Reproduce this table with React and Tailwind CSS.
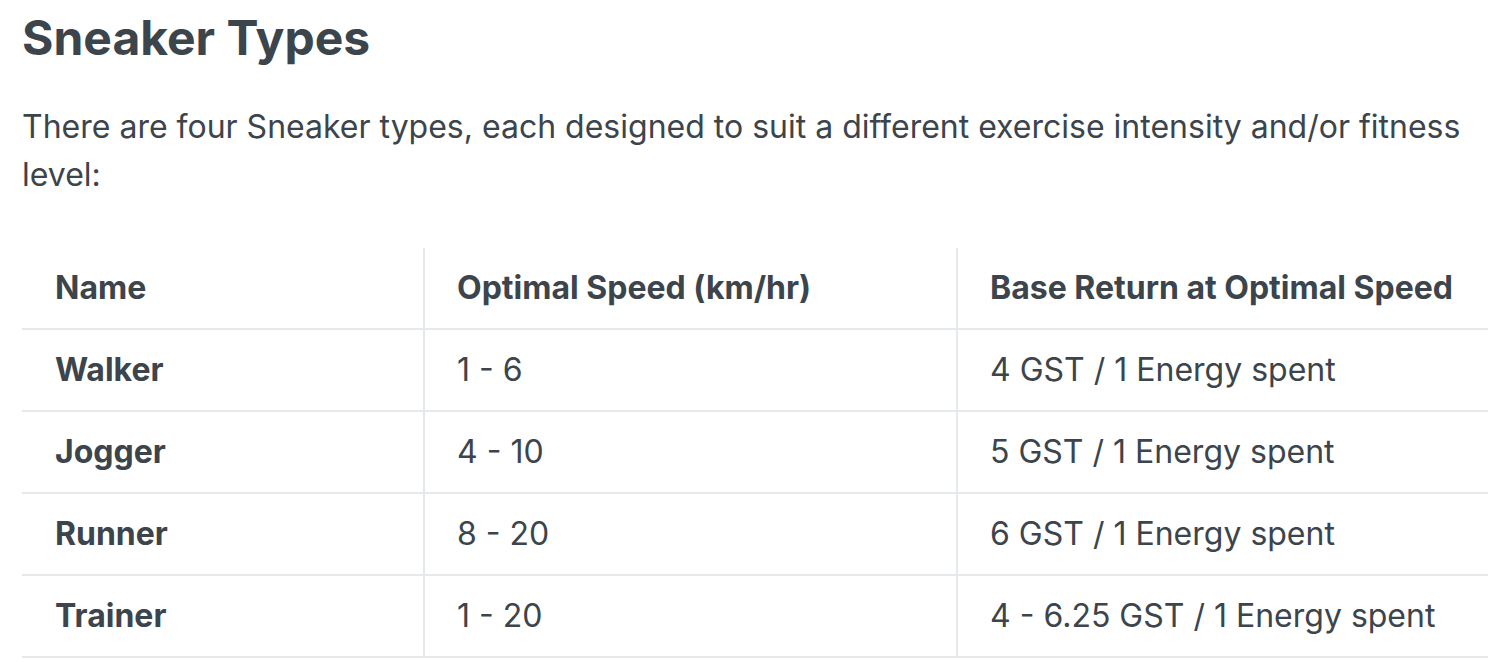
const rows = [
  { name: "Walker", speed: "1 - 6", ret: "4 GST / 1 Energy spent" },
  { name: "Jogger", speed: "4 - 10", ret: "5 GST / 1 Energy spent" },
  { name: "Runner", speed: "8 - 20", ret: "6 GST / 1 Energy spent" },
  { name: "Trainer", speed: "1 - 20", ret: "4 - 6.25 GST / 1 Energy spent" },
];

export default function App() {
  return (
    <div className="min-h-screen bg-white px-[22px] text-[#3c444c]" style={{ fontFamily: "Inter, 'Noto Sans', sans-serif" }}>
      <h2 className="pt-[6px] text-[48px] font-bold leading-[64px]">Sneaker Types</h2>

      <p className="mt-[33px] w-[1466px] text-[32px] leading-[48px]">
        There are four Sneaker types, each designed to suit a different exercise intensity and/or fitness level:
      </p>

      <div className="mt-[49px] grid w-[1466px] grid-cols-[401px_533px_532px] text-[32px]">
        <div className="flex h-[82px] items-center border-b-2 border-[#e6e9ec] pl-[33px] font-bold">Name</div>
        <div className="flex h-[82px] items-center border-b-2 border-l-2 border-[#e6e9ec] pl-[32px] font-bold">Optimal Speed (km/hr)</div>
        <div className="flex h-[82px] items-center border-b-2 border-l-2 border-[#e6e9ec] pl-[32px] font-bold">Base Return at Optimal Speed</div>

        {rows.map((r) => (
          <div key={r.name} className="contents">
            <div className="flex h-[82px] items-center border-b-2 border-[#e6e9ec] pl-[33px] font-bold">{r.name}</div>
            <div className="flex h-[82px] items-center border-b-2 border-l-2 border-[#e6e9ec] pl-[32px]">{r.speed}</div>
            <div className="flex h-[82px] items-center border-b-2 border-l-2 border-[#e6e9ec] pl-[32px]">{r.ret}</div>
          </div>
        ))}
      </div>
    </div>
  );
}
